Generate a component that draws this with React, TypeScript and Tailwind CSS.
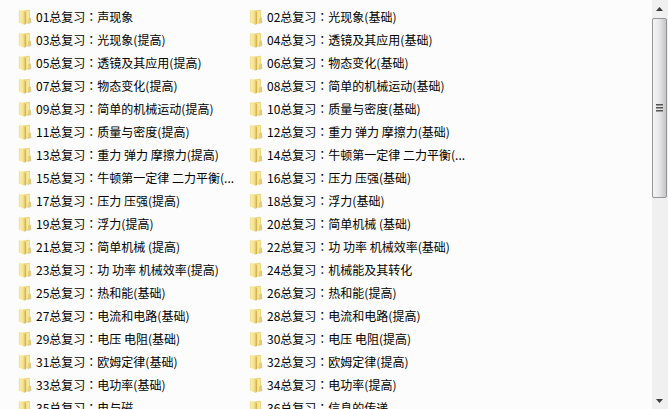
const folders = [
  ['01', '声现象'],
  ['02', '光现象(基础)'],
  ['03', '光现象(提高)'],
  ['04', '透镜及其应用(基础)'],
  ['05', '透镜及其应用(提高)'],
  ['06', '物态变化(基础)'],
  ['07', '物态变化(提高)'],
  ['08', '简单的机械运动(基础)'],
  ['09', '简单的机械运动(提高)'],
  ['10', '质量与密度(基础)'],
  ['11', '质量与密度(提高)'],
  ['12', '重力 弹力 摩擦力(基础)'],
  ['13', '重力 弹力 摩擦力(提高)'],
  ['14', '牛顿第一定律 二力平衡(...'],
  ['15', '牛顿第一定律 二力平衡(...'],
  ['16', '压力 压强(基础)'],
  ['17', '压力 压强(提高)'],
  ['18', '浮力(基础)'],
  ['19', '浮力(提高)'],
  ['20', '简单机械 (基础)'],
  ['21', '简单机械 (提高)'],
  ['22', '功 功率 机械效率(基础)'],
  ['23', '功 功率 机械效率(提高)'],
  ['24', '机械能及其转化'],
  ['25', '热和能(基础)'],
  ['26', '热和能(提高)'],
  ['27', '电流和电路(基础)'],
  ['28', '电流和电路(提高)'],
  ['29', '电压 电阻(基础)'],
  ['30', '电压 电阻(提高)'],
  ['31', '欧姆定律(基础)'],
  ['32', '欧姆定律(提高)'],
  ['33', '电功率(基础)'],
  ['34', '电功率(提高)'],
  ['35', '电与磁'],
  ['36', '信息的传递'],
]

function FolderIcon() {
  return (
    <svg width="14" height="16" viewBox="0 0 14 16" className="shrink-0" aria-hidden="true">
      <path d="M10 7.5 12.8 9 13.4 14 9.5 15z" fill="#cfcab4" />
      <path d="M5 1.6 11.2 .8 12 1.6V13.4L7 14.8z" fill="#ecd67c" />
      <path d="M8.4 2.2 11.2 1.7V12.6L8.4 13.6z" fill="#f5e6a0" />
      <path d="M1 1.4 1.8 .8 6.8 2.2 7.6 3.2V15.2L6.6 15.7 1 13.8z" fill="url(#folderFront)" />
      <path d="M7.4 3.2V15" stroke="#cdac45" strokeWidth="0.8" />
      <path d="M1.3 1.6V13.6" stroke="#ead27a" strokeWidth="0.6" />
      <path d="M10 9.6 12.4 8.6 12.8 13 10.4 14z" fill="#e6cc6c" />
    </svg>
  )
}

function Scrollbar() {
  return (
    <div className="flex w-4 shrink-0 flex-col bg-[#f0f0f0] pr-px">
      <button aria-label="向上滚动" className="flex h-[18px] shrink-0 items-center justify-center">
        <svg width="7" height="4" viewBox="0 0 7 4">
          <path d="M3.5 0 7 4H0z" fill="#3c3c3c" />
        </svg>
      </button>
      <button
        aria-label="滚动滑块"
        className="flex h-[180px] shrink-0 items-center justify-center rounded-xs border border-[#959595] bg-linear-to-r from-[#f6f6f6] via-[#e6e6e8] to-[#c4c4c8]"
      >
        <svg width="7" height="8" viewBox="0 0 7 8">
          <path d="M0 .5H7M0 3.5H7M0 6.5H7" stroke="#555" />
          <path d="M0 1.5H7M0 4.5H7M0 7.5H7" stroke="#9a9a9a" />
        </svg>
      </button>
      <div className="flex-1" />
      <button aria-label="向下滚动" className="flex h-4 shrink-0 items-center justify-center">
        <svg width="7" height="4" viewBox="0 0 7 4">
          <path d="M0 0H7L3.5 4z" fill="#3c3c3c" />
        </svg>
      </button>
    </div>
  )
}

export default function App() {
  return (
    <div
      lang="zh-CN"
      className="flex h-screen overflow-hidden bg-[#fcfcfc] font-['Noto_Sans_CJK_SC',sans-serif] text-xs text-black"
    >
      {/* shared gradient for the folder icons */}
      <svg className="absolute" width="0" height="0" aria-hidden="true">
        <defs>
          <linearGradient id="folderFront" x1="0" x2="1" y1="0" y2="0">
            <stop offset="0" stopColor="#faf0b4" />
            <stop offset="0.6" stopColor="#f4e394" />
            <stop offset="1" stopColor="#dfc057" />
          </linearGradient>
        </defs>
      </svg>

      <ul className="grid min-w-0 flex-1 auto-rows-[23px] grid-cols-[231px_1fr] pt-[5px] pl-[18px]">
        {folders.map(([num, title]) => (
          <li key={num} className="flex items-center gap-1 whitespace-nowrap">
            <FolderIcon />
            <span>
              {num}总复习
              <span lang="zh-TW" className="font-['Noto_Sans_CJK_TC',sans-serif]">：</span>
              {title}
            </span>
          </li>
        ))}
      </ul>
      <Scrollbar />
    </div>
  )
}
